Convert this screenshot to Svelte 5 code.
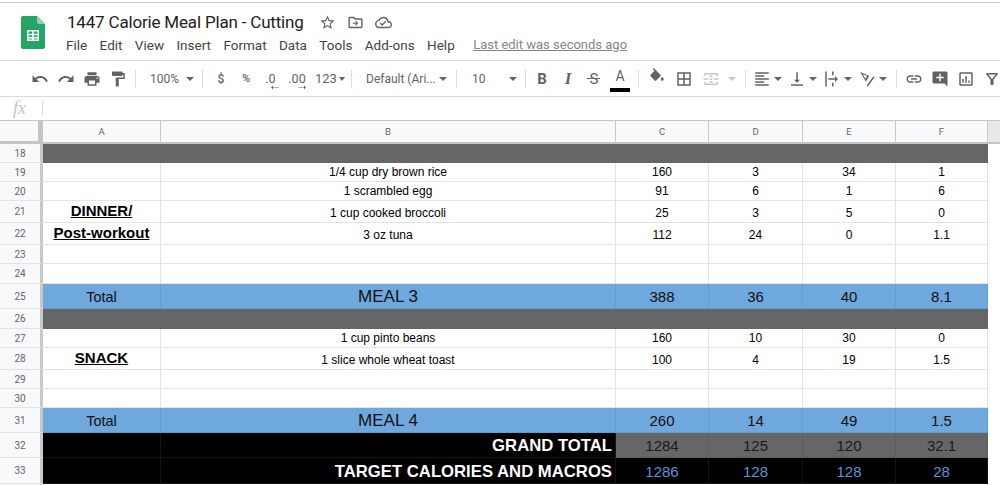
<script>
	const menus = ['File', 'Edit', 'View', 'Insert', 'Format', 'Data', 'Tools', 'Add-ons', 'Help'];
	const cols = ['A', 'B', 'C', 'D', 'E', 'F'];

	// row number, height, style, cell values A..F
	const rows = [
		{ n: 18, h: 19, kind: 'dark', cells: ['', '', '', '', '', ''] },
		{ n: 19, h: 19, cells: ['', '1/4 cup dry brown rice', '160', '3', '34', '1'] },
		{ n: 20, h: 19, cells: ['', '1 scrambled egg', '91', '6', '1', '6'] },
		{ n: 21, h: 22, label: true, cells: ['DINNER/', '1 cup cooked broccoli', '25', '3', '5', '0'] },
		{ n: 22, h: 22, label: true, cells: ['Post-workout', '3 oz tuna', '112', '24', '0', '1.1'] },
		{ n: 23, h: 19, cells: ['', '', '', '', '', ''] },
		{ n: 24, h: 20, cells: ['', '', '', '', '', ''] },
		{ n: 25, h: 25, kind: 'total', cells: ['Total', 'MEAL 3', '388', '36', '40', '8.1'] },
		{ n: 26, h: 20, kind: 'dark', cells: ['', '', '', '', '', ''] },
		{ n: 27, h: 19, cells: ['', '1 cup pinto beans', '160', '10', '30', '0'] },
		{ n: 28, h: 22, label: true, cells: ['SNACK', '1 slice whole wheat toast', '100', '4', '19', '1.5'] },
		{ n: 29, h: 19, cells: ['', '', '', '', '', ''] },
		{ n: 30, h: 19, cells: ['', '', '', '', '', ''] },
		{ n: 31, h: 25, kind: 'total', cells: ['Total', 'MEAL 4', '260', '14', '49', '1.5'] },
		{ n: 32, h: 25, kind: 'grand', cells: ['', 'GRAND TOTAL', '1284', '125', '120', '32.1'] },
		{ n: 33, h: 26, kind: 'target', cells: ['', 'TARGET CALORIES AND MACROS', '1286', '128', '128', '28'] }
	];
</script>

<div class="page">
	<header class="head">
		<svg class="logo" viewBox="0 0 24 33" width="24" height="33">
			<path d="M2 0h14l8 8v23a2 2 0 0 1-2 2H2a2 2 0 0 1-2-2V2a2 2 0 0 1 2-2z" fill="#23a566" />
			<path d="M16 0l8 8h-6a2 2 0 0 1-2-2z" fill="#8ed1b1" />
			<path d="M6 14h12v11H6z M7.5 15.5v2.2h3.7v-2.2z M12.8 15.5v2.2h3.7v-2.2z M7.5 19.2v1.8h3.7v-1.8z M12.8 19.2v1.8h3.7v-1.8z M7.5 22.4v1.2h3.7v-1.2z M12.8 22.4v1.2h3.7v-1.2z" fill="#fff" fill-rule="evenodd" />
		</svg>
		<div class="titles">
			<div class="title-row">
				<span class="title">1447 Calorie Meal Plan - Cutting</span>
				<svg class="ti" viewBox="0 0 24 24" width="17" height="17"><path d="M22 9.24l-7.19-.62L12 2 9.19 8.63 2 9.24l5.46 4.73L5.82 21 12 17.27 18.18 21l-1.63-7.03L22 9.24zM12 15.4l-3.76 2.27 1-4.28-3.32-2.88 4.38-.38L12 6.1l1.71 4.04 4.38.38-3.32 2.88 1 4.28L12 15.4z" /></svg>
				<svg class="ti" viewBox="0 0 24 24" width="17" height="17"><path d="M20 6h-8l-2-2H4c-1.1 0-1.99.9-1.99 2L2 18c0 1.1.9 2 2 2h16c1.1 0 2-.9 2-2V8c0-1.1-.9-2-2-2zm0 12H4V6h5.17l2 2H20v10z" /><path d="M12.5 9.5L16 13l-3.500 3.500-1.100-1.100 1.600-1.600H8v-1.600h5l-1.600-1.600z" /></svg>
				<svg class="ti" viewBox="0 0 24 24" width="17" height="17"><path d="M19.35 10.04C18.67 6.59 15.64 4 12 4 9.11 4 6.6 5.64 5.35 8.04 2.34 8.36 0 10.91 0 14c0 3.31 2.69 6 6 6h13c2.76 0 5-2.24 5-5 0-2.64-2.05-4.78-4.65-4.96zM19 18H6c-2.21 0-4-1.79-4-4 0-2.05 1.53-3.76 3.56-3.97l1.07-.11.5-.95C8.08 7.14 9.94 6 12 6c2.62 0 4.88 1.86 5.39 4.43l.3 1.5 1.53.11c1.56.1 2.78 1.41 2.78 2.96 0 1.65-1.35 3-3 3zm-9-3.820l-2.090-2.090L6.500 13.500 10 17l6.010-6.010-1.410-1.410z" /></svg>
			</div>
			<nav class="menu">
				{#each menus as m}
					<span>{m}</span>
				{/each}
				<span class="last">Last edit was seconds ago</span>
			</nav>
		</div>
	</header>

	<div class="toolbar">
		<button class="b"><svg viewBox="0 0 24 24"><path d="M12.5 8c-2.65 0-5.05.99-6.9 2.6L2 7v9h9l-3.62-3.62c1.39-1.16 3.16-1.88 5.12-1.88 3.54 0 6.55 2.31 7.6 5.5l2.37-.78C21.08 11.03 17.15 8 12.5 8z" /></svg></button>
		<button class="b"><svg viewBox="0 0 24 24"><path d="M18.4 10.6C16.55 8.99 14.15 8 11.5 8c-4.65 0-8.58 3.03-9.96 7.22L3.9 16c1.05-3.19 4.05-5.5 7.6-5.5 1.95 0 3.73.72 5.12 1.88L13 16h9V7l-3.6 3.6z" /></svg></button>
		<button class="b"><svg viewBox="0 0 24 24"><path d="M19 8H5c-1.66 0-3 1.34-3 3v6h4v4h12v-4h4v-6c0-1.66-1.34-3-3-3zm-3 11H8v-5h8v5zm3-7c-.55 0-1-.45-1-1s.45-1 1-1 1 .45 1 1-.45 1-1 1zm-1-9H6v4h12V3z" /></svg></button>
		<button class="b"><svg viewBox="0 0 24 24"><path d="M18 4V3c0-.55-.45-1-1-1H5c-.55 0-1 .45-1 1v4c0 .55.45 1 1 1h12c.55 0 1-.45 1-1V6h1v4H9v11c0 .55.45 1 1 1h2c.55 0 1-.45 1-1v-9h8V4h-3z" /></svg></button>
		<i class="sep s1"></i>
		<div class="drop zoom"><span>100%</span><i class="caret"></i></div>
		<i class="sep s2"></i>
		<button class="b t">$</button>
		<button class="b t pct">%</button>
		<button class="b dec">.0<svg viewBox="0 0 12 6"><path d="M12 2.500H3V0L0 3l3 3V3.500h9z" /></svg></button>
		<button class="b dec inc">.00<svg viewBox="0 0 12 6"><path d="M0 2.500h9V0l3 3-3 3V3.500H0z" /></svg></button>
		<div class="drop fmt"><span>123</span><i class="caret"></i></div>
		<i class="sep s3"></i>
		<div class="drop font"><span>Default (Ari...</span><i class="caret"></i></div>
		<i class="sep s4"></i>
		<div class="drop size"><span>10</span><i class="caret"></i></div>
		<i class="sep s5"></i>
		<button class="b bold">B</button>
		<button class="b ital">I</button>
		<button class="b strike">S</button>
		<button class="b color">A<i></i></button>
		<i class="sep s6"></i>
		<button class="b up"><svg viewBox="0 0 24 24"><path d="M16.56 8.94L7.62 0 6.21 1.41l2.38 2.38-5.150 5.150c-.59.59-.59 1.540 0 2.120l5.500 5.500c.29.29.68.44 1.060.44s.77-.15 1.060-.44l5.500-5.500c.59-.58.59-1.530 0-2.120z" /><path d="M19 11.500s-2 2.170-2 3.500c0 1.100.9 2 2 2s2-.9 2-2c0-1.330-2-3.500-2-3.500z" /></svg></button>
		<button class="b nudge"><svg viewBox="0 0 24 24"><path d="M3 3v18h18V3H3zm8 16H5v-6h6v6zm0-8H5V5h6v6zm8 8h-6v-6h6v6zm0-8h-6V5h6v6z" /></svg></button>
		<button class="b off nudge"><svg viewBox="0 0 24 24"><path d="M3 4h18v4h-2V6H5v2H3zM3 16h2v2h14v-2h2v4H3zM2 11h6v2H2zM16 11h6v2h-6zM10 11h4v2h-4zM10 7h4v2h-4zM10 15h4v2h-4z" /></svg></button>
		<div class="drop mergec"><i class="caret off"></i></div>
		<i class="sep s7"></i>
		<div class="drop ic"><svg viewBox="0 0 24 24"><path d="M15 15H3v2h12v-2zm0-8H3v2h12V7zM3 13h18v-2H3v2zm0 8h18v-2H3v2zM3 3v2h18V3H3z" /></svg><i class="caret"></i></div>
		<div class="drop ic"><svg viewBox="0 0 24 24"><path d="M16 13h-3V3h-2v10H8l4 4 4-4zM4 19v2h16v-2H4z" /></svg><i class="caret"></i></div>
		<div class="drop ic"><svg viewBox="0 0 24 24"><path d="M3 2h2v20H3zM12 2h2v5h-2zM12 17h2v5h-2zM7 11h9V8l4 4-4 4v-3H7z" /></svg><i class="caret"></i></div>
		<div class="drop ic"><svg viewBox="0 0 24 24"><path d="M3 2.500l12 5-4.500 8zM6.500 5.800l3.300 6 2.500-4.300zM22 9.500l-8.500 12h-2.500l9.300-13z" fill-rule="evenodd" /></svg><i class="caret"></i></div>
		<i class="sep s8"></i>
		<button class="b"><svg viewBox="0 0 24 24"><path d="M3.900 12c0-1.710 1.390-3.100 3.100-3.100h4V7H7c-2.760 0-5 2.240-5 5s2.240 5 5 5h4v-1.900H7c-1.710 0-3.100-1.390-3.100-3.100zM8 13h8v-2H8v2zm9-6h-4v1.900h4c1.710 0 3.100 1.390 3.100 3.100s-1.390 3.100-3.100 3.100h-4V17h4c2.760 0 5-2.240 5-5s-2.240-5-5-5z" /></svg></button>
		<button class="b"><svg viewBox="0 0 24 24"><path d="M21.990 4c0-1.100-.89-2-1.990-2H4c-1.100 0-2 .9-2 2v12c0 1.100.9 2 2 2h14l4 4-.01-18zM17 11h-4v4h-2v-4H7V9h4V5h2v4h4v2z" /></svg></button>
		<button class="b"><svg viewBox="0 0 24 24"><path d="M19 3H5c-1.100 0-2 .9-2 2v14c0 1.100.9 2 2 2h14c1.100 0 2-.9 2-2V5c0-1.100-.9-2-2-2zm0 16H5V5h14v14zM7 12h2v5H7zM11 8h2v9h-2zM15 14h2v3h-2z" /></svg></button>
		<button class="b"><svg viewBox="0 0 24 24"><path d="M7 6h10l-5.010 6.300L7 6zm-2.750-.39C6.270 8.200 10 13 10 13v6c0 .55.45 1 1 1h2c.55 0 1-.45 1-1v-6s3.720-4.800 5.740-7.390c.51-.66.04-1.610-.79-1.610H5.040c-.83 0-1.300.95-.79 1.610z" /></svg></button>
	</div>

	<div class="fbar">
		<span class="fx">fx</span>
		<i class="fsep"></i>
	</div>

	<div class="sheet">
		<div class="grid">
			<div class="corner"></div>
			{#each cols as c}
				<div class="colh">{c}</div>
			{/each}
			{#each rows as r}
				<div class="rowh" style="height: {r.h}px">{r.n}</div>
				{#each r.cells as v, i}
					<div class="cell {r.kind || ''}" class:wide={i === 1} class:num={i > 1} class:label={r.label && i === 0}>{v}</div>
				{/each}
			{/each}
			<div class="rowh tail"></div>
			{#each cols as c}
				<div class="cell"></div>
			{/each}
		</div>
		<div class="rest"></div>
	</div>
</div>

<style>
	:global(body) {
		margin: 0;
		background: #fff;
		overflow: hidden;
	}
	.page {
		width: 1000px;
		height: 485px;
		overflow: hidden;
		font-family: Roboto, sans-serif;
		display: flex;
		flex-direction: column;
	}
	.head {
		height: 57px;
		margin-top: 2px;
		border-top: 1px solid #c8c8c8;
		border-bottom: 1px solid #dadce0;
		display: flex;
		flex: none;
		padding-left: 21px;
	}
	.logo {
		margin-top: 13px;
		flex: none;
	}
	.titles {
		margin-left: 21px;
	}
	.title-row {
		display: flex;
		align-items: center;
		height: 22px;
		margin-top: 8px;
		padding-left: 1px;
	}
	.title {
		font-size: 17px;
		letter-spacing: -0.18px;
		color: #222;
		width: 252px;
		white-space: nowrap;
	}
	.ti {
		fill: #5f6368;
		margin-right: 11px;
		flex: none;
	}
	.menu {
		display: flex;
		font-size: 13.5px;
		color: #444;
		margin-top: 2px;
		height: 20px;
		line-height: 20px;
	}
	.menu span {
		margin-right: 12.4px;
		white-space: nowrap;
	}
	.menu .last {
		margin-left: 6px;
		color: #80868b;
		text-decoration: underline;
		font-size: 13px;
	}
	.toolbar {
		height: 35px;
		flex: none;
		border-bottom: 1px solid #dadce0;
		padding-left: 27px;
		display: flex;
		align-items: center;
		color: #5f6368;
		font-size: 12px;
	}
	.b {
		all: unset;
		width: 26px;
		height: 26px;
		flex: none;
		display: flex;
		align-items: center;
		justify-content: center;
		position: relative;
		color: #5f6368;
		font-family: Roboto, sans-serif;
		font-size: 13px;
	}
	.b svg,
	.ic svg {
		width: 18px;
		height: 18px;
		fill: #5f6368;
		flex: none;
	}
	.b.off svg {
		fill: #c4c6c9;
	}
	.b.up svg {
		margin-bottom: 4px;
	}
	.nudge {
		margin-left: 1px;
	}
	.sep {
		width: 1px;
		height: 18px;
		background: #dadce0;
		flex: none;
	}
	.s1 { margin: 0 6px 0 4px; }
	.s2 { margin: 0 5px 0 5px; }
	.s3 { margin: 0 6px 0 5px; }
	.s4 { margin: 0 5px 0 6px; }
	.s5 { margin: 0 3px 0 5px; }
	.s6 { margin: 0 5px 0 5px; }
	.s7 { margin: 0 4px 0 6px; }
	.s8 { margin: 0 4px 0 6px; }
	.drop {
		display: flex;
		align-items: center;
		flex: none;
		height: 26px;
		box-sizing: border-box;
		white-space: nowrap;
	}
	.caret {
		width: 0;
		height: 0;
		border-left: 4px solid transparent;
		border-right: 4px solid transparent;
		border-top: 4px solid #5f6368;
		display: block;
		flex: none;
	}
	.caret.off {
		border-top-color: #c4c6c9;
	}
	.zoom {
		width: 55px;
		padding-left: 8px;
		justify-content: space-between;
		padding-right: 3px;
	}
	.fmt {
		width: 34px;
		margin-left: 2px;
		padding-left: 3px;
		font-size: 13px;
		gap: 2px;
	}
	.fmt .caret {
		border-left-width: 3.500px;
		border-right-width: 3.500px;
	}
	.font {
		width: 92px;
		padding-left: 8px;
		justify-content: space-between;
		padding-right: 3px;
	}
	.size {
		width: 58px;
		padding-left: 10px;
		justify-content: space-between;
		padding-right: 3px;
	}
	.mergec {
		width: 14px;
		margin-left: 1px;
		justify-content: center;
	}
	.ic {
		width: 35px;
		padding-left: 3px;
		gap: 1px;
	}
	.ic .caret {
		margin-left: 2px;
	}
	.t {
		font-size: 12px;
		font-weight: 500;
	}
	.pct {
		width: 24px;
		font-size: 11px;
	}
	.dec {
		width: 25px;
		align-items: flex-start;
		padding-top: 5px;
		height: 21px;
		font-size: 12.500px;
	}
	.dec svg {
		position: absolute;
		width: 8px;
		height: 5px;
		left: 13px;
		bottom: 2px;
	}
	.inc {
		width: 26px;
		margin-left: 1px;
	}
	.inc svg {
		left: 14px;
	}
	.bold {
		font-weight: 700;
		font-size: 15px;
	}
	.ital {
		font-family: 'Liberation Serif', serif;
		font-weight: 700;
		font-style: italic;
		font-size: 17px;
	}
	.strike {
		font-size: 15px;
	}
	.strike::after {
		content: '';
		position: absolute;
		left: 6px;
		top: 12px;
		width: 13px;
		height: 1.500px;
		background: #5f6368;
	}
	.color {
		font-size: 14px;
		padding-bottom: 5px;
		height: 21px;
	}
	.color i {
		position: absolute;
		left: 3px;
		bottom: 0;
		width: 20px;
		height: 4px;
		background: #000;
	}
	.fbar {
		height: 23px;
		flex: none;
		border-bottom: 1px solid #c8c8c8;
		display: flex;
		align-items: center;
		padding-left: 13px;
	}
	.fx {
		font-family: 'Liberation Serif', serif;
		font-style: italic;
		font-size: 18px;
		color: #c4c4c4;
		width: 29px;
	}
	.fsep {
		width: 1px;
		height: 15px;
		background: #dadce0;
	}
	.sheet {
		display: flex;
		flex: 1;
		min-height: 0;
	}
	.grid {
		display: grid;
		grid-template-columns: 43px 118px 455px 93px 94px 93px 92px;
		grid-template-rows: 23px;
		grid-auto-rows: auto;
		font-family: 'Liberation Sans', sans-serif;
		flex: none;
	}
	.rest {
		flex: 1;
		background: #e8e8e8;
		border-bottom: 2px solid #c4c4c4;
		box-sizing: border-box;
		height: 23px;
	}
	.corner {
		background: #f8f9fa;
		border-right: 5px solid #c4c4c4;
		border-bottom: 3px solid #c4c4c4;
		box-sizing: border-box;
	}
	.colh {
		background: #f8f9fa;
		border-right: 1px solid #c8c8c8;
		border-bottom: 2px solid #c4c4c4;
		box-sizing: border-box;
		font-family: Roboto, sans-serif;
		font-size: 9.500px;
		color: #666;
		display: flex;
		align-items: center;
		justify-content: center;
	}
	.rowh {
		background: #f8f9fa;
		border-right: 3px solid #c8c8c8;
		border-bottom: 1px solid #e2e3e3;
		box-sizing: border-box;
		font-family: Roboto, sans-serif;
		font-size: 10px;
		color: #666;
		display: flex;
		align-items: center;
		justify-content: center;
	}
	.tail {
		height: 19px;
	}
	.cell {
		border-right: 1px solid #e2e3e3;
		border-bottom: 1px solid #e2e3e3;
		box-sizing: border-box;
		font-size: 12px;
		color: #000;
		display: flex;
		align-items: flex-end;
		justify-content: center;
		padding-bottom: 2px;
		white-space: nowrap;
		min-width: 0;
		overflow: hidden;
	}
	.label {
		font-size: 15px;
		font-weight: 700;
		text-decoration: underline;
		padding-bottom: 3px;
	}
	.dark {
		background: #666;
		border-color: #666;
	}
	.total {
		background: #6fa8dc;
		border-color: #659bcd;
		font-size: 14.5px;
		color: #111;
		padding-bottom: 3px;
	}
	.total.wide {
		font-size: 17px;
		padding-bottom: 1px;
	}
	.total.num {
		font-size: 15px;
	}
	.grand,
	.target {
		background: #000;
		border-color: #141414;
		color: #fff;
		padding-bottom: 3px;
	}
	.grand.wide,
	.target.wide {
		font-size: 16.7px;
		font-weight: 700;
		justify-content: flex-end;
		padding-right: 3px;
		padding-bottom: 1px;
		overflow: visible;
	}
	.grand.num {
		background: #666;
		border-color: #5e5e5e;
		color: #1a1a1a;
		font-size: 15px;
	}
	.target.num {
		color: #5b95d6;
		font-size: 15px;
	}
</style>
